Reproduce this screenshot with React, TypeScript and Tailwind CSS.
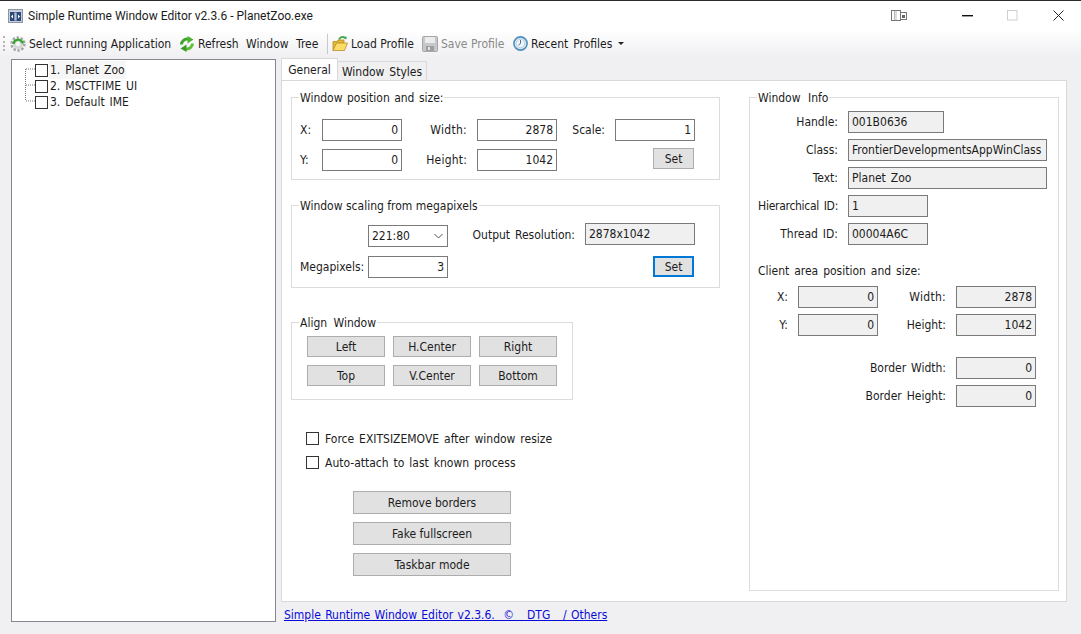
import React from 'react';

const inputBase = 'h-[22px] border border-[#7a7a7a] flex items-center leading-none';

const Field = ({ value, ro, left, w = 'w-[80px]' }: { value: string; ro?: boolean; left?: boolean; w?: string }) => (
  <div className={`${inputBase} ${w} ${ro ? 'bg-[#f0f0f0]' : 'bg-white'} ${left ? 'justify-start pl-[3px]' : 'justify-end pr-[3px]'}`}>
    {value}
  </div>
);

const Label = ({ children, left, cls = '' }: { children: React.ReactNode; left?: boolean; cls?: string }) => (
  <div className={`h-[22px] flex items-center whitespace-nowrap ${left ? '' : 'justify-end pr-[10px]'} ${cls}`}>{children}</div>
);

const Btn = ({ children, cls, focus }: { children: React.ReactNode; cls: string; focus?: boolean }) => (
  <button className={`flex items-center justify-center bg-[#e1e1e1] ${focus ? 'border-2 border-[#0078d7]' : 'border border-[#adadad]'} ${cls}`}>{children}</button>
);

const Group = ({ title, cls, legend, inner, children }: { title: string; cls: string; legend: string; inner?: string; children: React.ReactNode }) => (
  <fieldset className={`border border-[#dcdcdc] ${cls}`}>
    <legend className={`ml-[7px] px-px h-[16px] leading-[18px] whitespace-nowrap ${legend}`}>{title}</legend>
    <div className={inner}>{children}</div>
  </fieldset>
);

const Check = ({ label, cls }: { label: string; cls: string }) => (
  <div className={`flex items-center h-[13px] ${cls}`}>
    <span className="w-[13px] h-[13px] border border-[#333] bg-white mr-[6px]" />
    <span className="whitespace-nowrap">{label}</span>
  </div>
);

const TreeRow = ({ label, hi }: { label: string; hi?: boolean }) => (
  <div className="flex items-center h-[16px]">
    <span className="w-[13px] h-[13px] border border-[#333] bg-white mr-px" />
    <span className={`whitespace-nowrap px-px ${hi ? 'bg-[#f6f6f6]' : ''}`}>{label}</span>
  </div>
);

const AppIcon = () => (
  <svg width="15" height="14" viewBox="0 0 15 14" className="mr-[6px]">
    <rect x="0.5" y="0.5" width="14" height="13" fill="#c9d0da" stroke="#8a94a3" />
    <rect x="2" y="3" width="11" height="9" fill="#2c4a7c" />
    <path d="M7 3.5v8M8 3.5v8" stroke="#dfe8f4" strokeWidth="1" />
    <path d="M3 7.5l2-2v4zM12 7.5l-2-2v4z" fill="#fff" />
  </svg>
);

const GearIcon = () => (
  <svg width="16" height="16" viewBox="0 0 16 16">
    <circle cx="8" cy="8" r="6.4" fill="none" stroke="#a5a8a8" strokeWidth="2.6" strokeDasharray="2.4 1.6" />
    <circle cx="8" cy="8" r="5" fill="#d4d6d4" />
    <circle cx="8" cy="8" r="2.4" fill="#f4f4f4" />
    <path d="M3.6 8a4.5 4.5 0 0 1 8.4-2" fill="none" stroke="#39a52f" strokeWidth="2.2" />
    <path d="M13.6 4.2l-.4 4-3.2-2.4z" fill="#39a52f" />
  </svg>
);

const RefreshIcon = () => (
  <svg width="16" height="16" viewBox="0 0 16 16">
    <path d="M2.5 8.5A5.5 5.5 0 0 1 9 3.2" fill="none" stroke="#3fa52a" strokeWidth="3" />
    <path d="M8.5 0l6 3.6-6 3.9z" fill="#4cb232" />
    <path d="M13.5 7.5A5.5 5.5 0 0 1 7 12.8" fill="none" stroke="#5dbf38" strokeWidth="3" />
    <path d="M7.5 16l-6-3.6 6-3.9z" fill="#3a9d26" />
  </svg>
);

const FolderIcon = () => (
  <svg width="16" height="17" viewBox="0 0 16 17">
    <path d="M7 4.5a4 4 0 0 1 6-2" fill="none" stroke="#3ea64a" strokeWidth="1.8" />
    <path d="M14.6 1.2l-.2 3.4-3-1.4z" fill="#3ea64a" />
    <path d="M1 6.5h4l1-1.5h6v3H5l-3 7.5H1z" fill="#e5b93c" stroke="#b88a1e" strokeWidth="0.8" />
    <path d="M4.5 8h11l-3 7.5H1z" fill="#fbdc6a" stroke="#bd8f1f" strokeWidth="0.8" />
  </svg>
);

const SaveIcon = () => (
  <svg width="16" height="16" viewBox="0 0 16 16">
    <rect x="0.5" y="0.5" width="15" height="15" rx="1" fill="#c6c7c8" stroke="#a5a6a7" />
    <rect x="3" y="1" width="10" height="6" fill="#ececec" />
    <rect x="4" y="10" width="8" height="5" fill="#9d9e9f" />
    <rect x="6" y="11" width="2" height="3" fill="#e3e3e3" />
  </svg>
);

const ClockIcon = () => (
  <svg width="15" height="15" viewBox="0 0 15 15">
    <circle cx="7.5" cy="7.5" r="6.6" fill="#dbe9f3" stroke="#4f8fbd" strokeWidth="1.6" />
    <circle cx="7.5" cy="7.5" r="4.2" fill="#eef5fa" stroke="#9cbdd3" strokeWidth="0.6" />
    <path d="M7.5 4v3.5l-2 1.5" fill="none" stroke="#5a6f80" strokeWidth="1" />
  </svg>
);

const ToolItem = ({ icon, label, cls, gray }: { icon: React.ReactNode; label: string; cls: string; gray?: boolean }) => (
  <div className={`flex items-center gap-[3px] whitespace-nowrap ${cls} ${gray ? 'text-[#8a8a8a]' : ''}`}>
    {icon}
    <span>{label}</span>
  </div>
);

export default function App() {
  return (
    <div className="w-[1081px] h-[634px] overflow-hidden flex flex-col bg-[#f0f0f3] text-[12px] text-[#1c1c1c] font-['DejaVu_Sans',sans-serif] [font-stretch:condensed] [word-spacing:1.5px]">
      <div className="h-px bg-[#2a2a2a]" />
      {/* title bar */}
      <div className="h-[29px] bg-white flex items-center pl-[8px] shrink-0">
        <AppIcon />
        <span className="whitespace-nowrap -ml-px font-['Roboto',sans-serif] [font-stretch:normal] [word-spacing:0px]">Simple Runtime Window Editor v2.3.6 - PlanetZoo.exe</span>
        <div className="ml-auto flex items-center pr-[17px]">
          <svg width="16" height="12" viewBox="0 0 16 12" className="mr-[55px]">
            <rect x="0.5" y="0.5" width="9" height="10" fill="#fff" stroke="#777" />
            <path d="M3.5 1v9M5 1v9" stroke="#bbb" />
            <rect x="9.5" y="2.5" width="6" height="7" fill="#fff" stroke="#777" />
            <rect x="11" y="5" width="3" height="3" fill="#666" />
          </svg>
          <svg width="11" height="2" viewBox="0 0 11 2" className="mr-[34px]">
            <rect width="11" height="1.4" fill="#111" />
          </svg>
          <svg width="11" height="11" viewBox="0 0 11 11" className="mr-[35px]">
            <rect x="0.5" y="0.5" width="9.5" height="9.5" fill="none" stroke="#cfcfcf" />
          </svg>
          <svg width="11" height="11" viewBox="0 0 11 11">
            <path d="M0.5 0.5l10 10M10.5 0.5l-10 10" stroke="#222" strokeWidth="1" />
          </svg>
        </div>
      </div>
      {/* toolbar */}
      <div className="h-[27px] mb-[2px] shrink-0 flex items-center pl-[3px] bg-gradient-to-b from-white to-[#f0f0f3]">
        <div className="w-[2px] h-[15px] border-l-2 border-dotted border-[#b5b5b5] mr-[5px]" />
        <ToolItem icon={<GearIcon />} label="Select running Application" cls="w-[169px] [word-spacing:0px]" />
        <ToolItem icon={<RefreshIcon />} label="Refresh Window Tree" cls="w-[148px] [word-spacing:4px]" />
        <div className="w-px h-[20px] bg-[#c8c8c8] mr-[4px]" />
        <ToolItem icon={<FolderIcon />} label="Load Profile" cls="w-[90px] [word-spacing:0px]" />
        <ToolItem icon={<SaveIcon />} label="Save Profile" cls="w-[91px] [word-spacing:0px]" gray />
        <ToolItem icon={<ClockIcon />} label="Recent Profiles" cls="" />
        <div className="ml-[6px] w-0 h-0 border-x-[3px] border-x-transparent border-t-[3px] border-t-[#222]" />
      </div>
      {/* body */}
      <div className="flex pl-[11px] gap-[5px]">
        <div className="w-[265px] h-[563px] border border-[#828790] bg-white relative pl-[23px] pt-[2px]">
          <svg width="12" height="40" viewBox="0 0 12 40" className="absolute left-[13px] top-[8px]">
            <path d="M0.5 1v32M1 1h10M1 17h10M1 33h10" stroke="#777" strokeDasharray="1 1" fill="none" />
          </svg>
          <TreeRow label="1. Planet Zoo" hi />
          <TreeRow label="2. MSCTFIME UI" />
          <TreeRow label="3. Default IME" />
        </div>
        <div className="w-[786px]">
          {/* tabs */}
          <div className="flex items-end h-[21px]">
            <div className="w-[57px] h-[22px] relative z-10 bg-white border border-b-0 border-[#d9d9d9] flex items-center justify-center">General</div>
            <div className="w-[89px] h-[19px] pt-px bg-[#f0f0f0] border border-b-0 border-l-0 border-[#d9d9d9] flex items-center justify-center whitespace-nowrap">Window Styles</div>
          </div>
          {/* panel */}
          <div className="h-[522px] bg-white border border-[#d9d9d9] flex pt-[8px] pl-[9px]">
            <div className="w-[429px] shrink-0">
              <Group title="Window position and size:" legend="[word-spacing:1px]" cls="h-[91px]" inner="pl-[8px] pt-[14px]">
                <div className="grid grid-cols-[22px_80px_75px_80px_58px_80px] gap-y-[8px]">
                  <Label left>X:</Label>
                  <Field value="0" />
                  <Label cls="tracking-[0.3px]">Width:</Label>
                  <Field value="2878" />
                  <Label>Scale:</Label>
                  <Field value="1" />
                  <Label left>Y:</Label>
                  <Field value="0" />
                  <Label cls="tracking-[0.2px]">Height:</Label>
                  <Field value="1042" />
                  <div />
                  <Btn cls="w-[41px] h-[21px] ml-[38px] -mt-px">Set</Btn>
                </div>
              </Group>
              <Group title="Window scaling from megapixels" legend="[word-spacing:0px]" cls="h-[91px] mt-[17px]" inner="pl-[8px] pt-[10px]">
                <div className="grid grid-cols-[68px_80px_137px_110px] grid-rows-[24px_22px] gap-y-[9px]">
                  <div />
                  <div className="h-[22px] mt-[2px] border border-[#7a7a7a] bg-white flex items-center justify-between pl-[3px] pr-[4px]">
                    <span>221:80</span>
                    <svg width="9" height="6" viewBox="0 0 9 6">
                      <path d="M0.5 1l4 4 4-4" fill="none" stroke="#555" />
                    </svg>
                  </div>
                  <div className="h-[24px] flex items-center justify-end pr-[10px] whitespace-nowrap">Output Resolution:</div>
                  <Field value="2878x1042" ro left w="w-[110px]" />
                  <Label left>Megapixels:</Label>
                  <Field value="3" />
                  <div />
                  <Btn cls="w-[41px] h-[21px] ml-[68px]" focus>Set</Btn>
                </div>
              </Group>
              <Group title="Align Window" legend="[word-spacing:3px] leading-[16px]" cls="w-[282px] h-[86px] mt-[26px]" inner="pl-[15px] pt-[6px]">
                <div className="grid grid-cols-[78px_78px_78px] gap-[8px] auto-rows-[21px]">
                  {['Left', 'H.Center', 'Right', 'Top', 'V.Center', 'Bottom'].map((t) => (
                    <Btn key={t} cls="h-[21px]">{t}</Btn>
                  ))}
                </div>
              </Group>
              <Check label="Force EXITSIZEMOVE after window resize" cls="mt-[32px] ml-[15px]" />
              <Check label="Auto-attach to last known process" cls="mt-[11px] ml-[15px]" />
              <div className="mt-[22px] ml-[62px] flex flex-col gap-[8px]">
                <Btn cls="w-[158px] h-[23px]">Remove borders</Btn>
                <Btn cls="w-[158px] h-[23px]">Fake fullscreen</Btn>
                <Btn cls="w-[158px] h-[23px]">Taskbar mode</Btn>
              </div>
            </div>
            <Group title="Window Info" legend="[word-spacing:4px]" cls="w-[310px] h-[502px] ml-[29px]" inner="pt-[6px]">
              <div className="grid grid-cols-[98px_1fr] gap-y-[6px]">
                <Label>Handle:</Label>
                <Field value="001B0636" ro left w="w-[96px]" />
                <Label>Class:</Label>
                <Field value="FrontierDevelopmentsAppWinClass" ro left w="w-[199px]" />
                <Label>Text:</Label>
                <Field value="Planet Zoo" ro left w="w-[199px]" />
                <Label cls="tracking-[-0.28px]">Hierarchical ID:</Label>
                <Field value="1" ro left />
                <Label>Thread ID:</Label>
                <Field value="00004A6C" ro left />
              </div>
              <div className="pl-[8px] h-[41px] pt-[19px] leading-[14px] whitespace-nowrap">Client area position and size:</div>
              <div className="grid grid-cols-[48px_80px_78px_80px] gap-y-[6px]">
                <Label>X:</Label>
                <Field value="0" ro />
                <Label cls="tracking-[0.3px]">Width:</Label>
                <Field value="2878" ro />
                <Label>Y:</Label>
                <Field value="0" ro />
                <Label>Height:</Label>
                <Field value="1042" ro />
              </div>
              <div className="grid grid-cols-[206px_80px] gap-y-[6px] mt-[21px]">
                <Label>Border Width:</Label>
                <Field value="0" ro />
                <Label>Border Height:</Label>
                <Field value="0" ro />
              </div>
            </Group>
          </div>
          {/* footer link */}
          <div className="pl-[3px] pt-[4px]">
            <a className="text-[#0a0ad8] underline whitespace-pre [word-spacing:0.85px]">{'Simple Runtime Window Editor v2.3.6.  ©   DTG   / Others'}</a>
          </div>
        </div>
      </div>
    </div>
  );
}
